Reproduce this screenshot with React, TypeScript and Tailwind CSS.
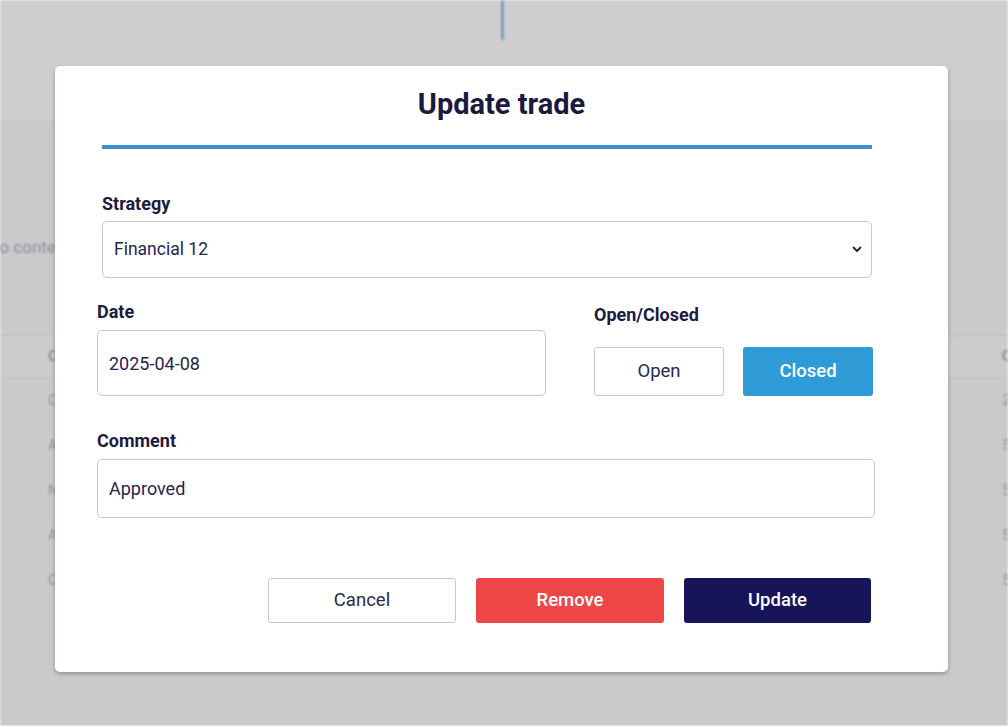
import { useState } from 'react';

const font = { fontFamily: 'Roboto, "Noto Sans", Arial, sans-serif' };

const bgRows = [
  { left: 'C', right: '2' },
  { left: 'A', right: '5' },
  { left: 'N', right: '5' },
  { left: 'A', right: '5' },
  { left: 'C', right: '5' },
];

function BackdropPage() {
  return (
    <div className="h-[726px] overflow-hidden bg-[#cbc9cc] blur-[1.2px]">
      <div className="h-[120px] bg-[#cfcdd0] flex justify-center">
        <div className="ml-[-4px] w-[3px] h-[40px] bg-[#7b9bbb]" />
      </div>
      <div className="h-[215px] pt-[115px]">
        <p className="ml-[-10px] text-[17px] text-[#8f8d92]">no content yet</p>
      </div>
      <div className="border-t border-[#bfbdc0]">
        <div className="h-[42px] bg-[#cdcbce] flex items-center justify-between pl-[48px] text-[15px] text-[#8b898e] font-semibold border-b border-[#c0bec1]">
          <span>C</span>
          <span className="mr-[-4px]">Q</span>
        </div>
        {bgRows.map((r, i) => (
          <div
            key={i}
            className="h-[45px] flex items-center justify-between pl-[48px] text-[14px] text-[#939196] border-b border-[#c6c4c7]"
          >
            <span>{r.left}</span>
            <span className="mr-[-2px]">{r.right}</span>
          </div>
        ))}
      </div>
    </div>
  );
}

function Chevron() {
  return (
    <svg width="10" height="7" viewBox="0 0 10 7" fill="none">
      <path d="M1.5 1.5 L5 5 L8.5 1.5" stroke="#24224a" strokeWidth="1.8" strokeLinecap="round" strokeLinejoin="round" />
    </svg>
  );
}

export default function App() {
  const [closed, setClosed] = useState(true);

  return (
    <div className="relative w-[1008px] h-[726px] overflow-hidden" style={font}>
      <BackdropPage />

      {/* Update trade dialog */}
      <div className="absolute left-[55px] top-[66px] w-[893px] h-[606px] bg-white rounded-[5px] shadow-[0_2px_4px_rgba(0,0,0,0.28)] pt-[21px] pl-[42px] pr-[73px]">
        <h2 className="h-[34px] leading-[34px] text-center text-[29px] font-bold text-[#1b1940] mr-[-31px]">
          Update trade
        </h2>
        <div className="mt-[24px] ml-[5px] mr-[3px] h-[4px] bg-[#3d8fd0]" />

        {/* Strategy */}
        <div className="ml-[5px] mr-[3px]">
          <label className="block mt-[45px] h-[20px] leading-[20px] text-[18px] font-bold text-[#1d1b3f]">
            Strategy
          </label>
          <div className="mt-[7px] h-[57px] rounded-[5px] border border-[#c9c8cc] flex items-center justify-between pl-[11px] pr-[9px]">
            <span className="text-[17.5px] text-[#27254b]">Financial 12</span>
            <Chevron />
          </div>
        </div>

        {/* Date + Open/Closed */}
        <div className="mt-[24px] flex items-start">
          <div className="w-[449px]">
            <label className="block h-[20px] leading-[20px] text-[18px] font-bold text-[#1d1b3f]">Date</label>
            <div className="mt-[8px] h-[66px] rounded-[5px] border border-[#c9c8cc] flex items-center pl-[11px]">
              <span className="text-[18px] text-[#27254b]">2025-04-08</span>
            </div>
          </div>
          <div className="ml-[48px] pt-[3px]">
            <label className="block h-[20px] leading-[20px] text-[18px] font-bold text-[#1d1b3f]">Open/Closed</label>
            <div className="mt-[22px] flex gap-[19px]">
              <button
                onClick={() => setClosed(false)}
                className={`w-[130px] h-[49px] rounded-[3px] text-[18.5px] ${
                  closed
                    ? 'bg-white border border-[#c3c5cf] text-[#2c2a50]'
                    : 'bg-[#2f9bd7] text-white font-medium'
                }`}
              >
                Open
              </button>
              <button
                onClick={() => setClosed(true)}
                className={`w-[130px] h-[49px] rounded-[3px] text-[18.5px] ${
                  closed
                    ? 'bg-[#2f9bd7] text-white font-medium'
                    : 'bg-white border border-[#c3c5cf] text-[#2c2a50]'
                }`}
              >
                Closed
              </button>
            </div>
          </div>
        </div>

        {/* Comment */}
        <label className="block mt-[35px] h-[20px] leading-[20px] text-[18px] font-bold text-[#1d1b3f]">Comment</label>
        <div className="mt-[8px] h-[59px] rounded-[5px] border border-[#c9c8cc] flex items-center pl-[11px]">
          <span className="text-[18px] text-[#27254b]">Approved</span>
        </div>

        {/* Actions */}
        <div className="mt-[60px] flex justify-end gap-[20px] pr-[4px]">
          <button className="w-[188px] h-[45px] rounded-[3px] bg-white border border-[#c9c8cc] text-[18.5px] text-[#2a2850]">
            Cancel
          </button>
          <button className="w-[188px] h-[45px] rounded-[3px] bg-[#ee4646] text-[18.5px] font-medium text-white">
            Remove
          </button>
          <button className="w-[187px] h-[45px] rounded-[3px] bg-[#17145a] text-[18.5px] font-medium text-white">
            Update
          </button>
        </div>
      </div>
    </div>
  );
}
